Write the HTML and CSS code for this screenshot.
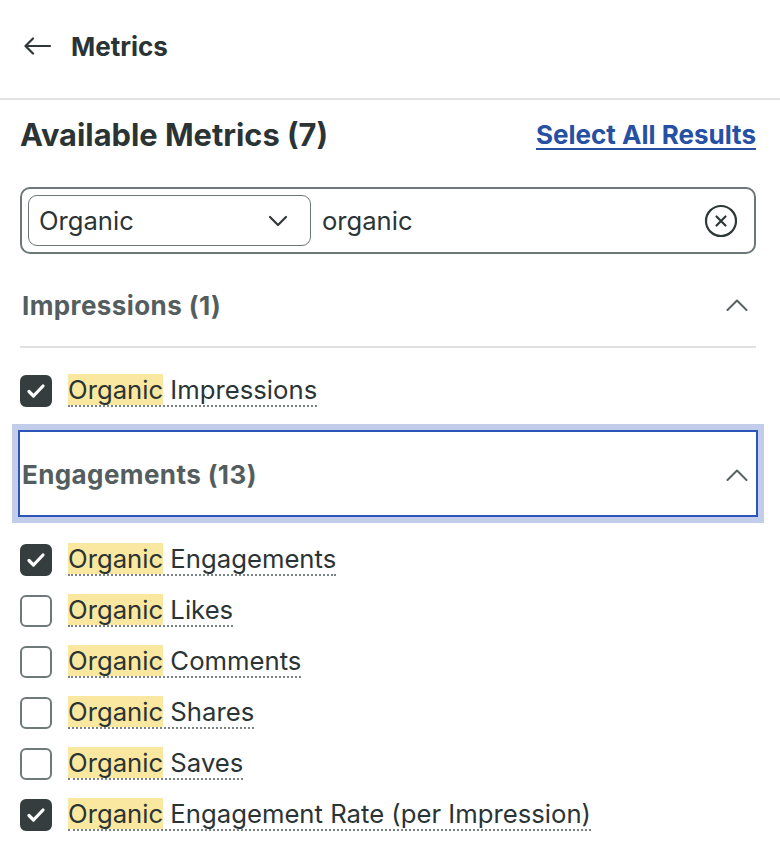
FILE: index.html
```html
<!DOCTYPE html>
<html lang="en">
<head>
    <meta charset="UTF-8">
    <meta name="viewport" content="width=device-width, initial-scale=1.0">
    <title>Metrics</title>
    <link rel="stylesheet" href="styles.css">
</head>
<body>
    <header class="topbar">
        <button class="back-btn" aria-label="Back">
            <svg width="28" height="18" viewBox="0 0 28 18" fill="none" stroke="#2f3838" stroke-width="2.2" stroke-linecap="round" stroke-linejoin="round">
                <path d="M26 9H2"/>
                <path d="M9 1.5L1.5 9 9 16.5"/>
            </svg>
        </button>
        <h1>Metrics</h1>
    </header>

    <main class="panel">
        <div class="panel-head">
            <h2>Available Metrics (7)</h2>
            <a href="#" class="select-all">Select All Results</a>
        </div>

        <div class="search">
            <div class="select">
                <span>Organic</span>
                <svg width="20" height="12" viewBox="0 0 20 12" fill="none" stroke="#2f3838" stroke-width="2.2" stroke-linecap="round" stroke-linejoin="round">
                    <path d="M2 2l8 8 8-8"/>
                </svg>
            </div>
            <input type="text" class="search-input" value="organic">
            <button class="clear-btn" aria-label="Clear">
                <svg width="34" height="34" viewBox="0 0 34 34" fill="none" stroke="#2f3838" stroke-width="2.2" stroke-linecap="round">
                    <circle cx="17" cy="17" r="15"/>
                    <path d="M12.5 12.5l9 9M21.5 12.5l-9 9"/>
                </svg>
            </button>
        </div>

        <section class="group">
            <button class="group-head">
                <span>Impressions (1)</span>
                <svg width="22" height="12" viewBox="0 0 22 12" fill="none" stroke="#576161" stroke-width="2" stroke-linecap="round" stroke-linejoin="round">
                    <path d="M1.5 11L11 1.5 20.5 11"/>
                </svg>
            </button>
            <ul class="metric-list">
                <li>
                    <label class="metric">
                        <span class="box checked"><svg width="20" height="16" viewBox="0 0 20 16" fill="none" stroke="#fff" stroke-width="3.2" stroke-linecap="round" stroke-linejoin="round"><path d="M3 8.5l4.5 4.5 9.5-10"/></svg></span>
                        <span class="name"><mark>Organic</mark> Impressions</span>
                    </label>
                </li>
            </ul>
        </section>

        <section class="group">
            <button class="group-head is-focused">
                <span>Engagements (13)</span>
                <svg width="22" height="12" viewBox="0 0 22 12" fill="none" stroke="#576161" stroke-width="2" stroke-linecap="round" stroke-linejoin="round">
                    <path d="M1.5 11L11 1.5 20.5 11"/>
                </svg>
            </button>
            <ul class="metric-list">
                <li>
                    <label class="metric">
                        <span class="box checked"><svg width="20" height="16" viewBox="0 0 20 16" fill="none" stroke="#fff" stroke-width="3.2" stroke-linecap="round" stroke-linejoin="round"><path d="M3 8.5l4.5 4.5 9.5-10"/></svg></span>
                        <span class="name"><mark>Organic</mark> Engagements</span>
                    </label>
                </li>
                <li>
                    <label class="metric">
                        <span class="box"></span>
                        <span class="name"><mark>Organic</mark> Likes</span>
                    </label>
                </li>
                <li>
                    <label class="metric">
                        <span class="box"></span>
                        <span class="name"><mark>Organic</mark> Comments</span>
                    </label>
                </li>
                <li>
                    <label class="metric">
                        <span class="box"></span>
                        <span class="name"><mark>Organic</mark> Shares</span>
                    </label>
                </li>
                <li>
                    <label class="metric">
                        <span class="box"></span>
                        <span class="name"><mark>Organic</mark> Saves</span>
                    </label>
                </li>
                <li>
                    <label class="metric">
                        <span class="box checked"><svg width="20" height="16" viewBox="0 0 20 16" fill="none" stroke="#fff" stroke-width="3.2" stroke-linecap="round" stroke-linejoin="round"><path d="M3 8.5l4.5 4.5 9.5-10"/></svg></span>
                        <span class="name"><mark>Organic</mark> Engagement Rate (per Impression)</span>
                    </label>
                </li>
            </ul>
        </section>
    </main>
</body>
</html>
```

FILE: styles.css
```css
body {
    margin: 0;
    font-family: Inter, "Noto Sans", sans-serif;
    color: #2b3434;
    background: #ffffff;
}

button {
    font-family: inherit;
    background: none;
    border: none;
    padding: 0;
    cursor: pointer;
}

.topbar {
    display: flex;
    align-items: center;
    height: 100px;
    padding-left: 24px;
    border-bottom: 2px solid #e2e2e2;
    box-sizing: border-box;
}

.back-btn {
    display: flex;
    margin-right: 19px;
    margin-top: -6px;
}

.topbar h1 {
    margin: -6px 0 0;
    font-size: 26px;
    font-weight: 700;
}

.panel {
    padding: 0 24px 0 20px;
}

.panel-head {
    display: flex;
    justify-content: space-between;
    align-items: center;
    height: 68px;
}

.panel-head h2 {
    margin: 0;
    font-size: 30.8px;
    font-weight: 700;
}

.select-all {
    color: #2650a3;
    font-size: 26px;
    font-weight: 700;
    text-decoration: underline;
    text-underline-offset: 4px;
    text-decoration-thickness: 2px;
}

.search {
    display: flex;
    align-items: center;
    margin-top: 19px;
    height: 67px;
    padding: 0 16px 0 6px;
    border: 2px solid #6e7778;
    border-radius: 10px;
    box-sizing: border-box;
}

.select {
    display: flex;
    align-items: center;
    justify-content: space-between;
    flex-shrink: 0;
    width: 283px;
    height: 51px;
    padding: 0 22px 0 10px;
    border: 1.5px solid #6e7778;
    border-radius: 9px;
    box-sizing: border-box;
    font-size: 25.6px;
}

.search-input {
    flex: 1;
    min-width: 0;
    border: none;
    outline: none;
    margin-left: 11px;
    font-family: inherit;
    font-size: 25.6px;
    color: #2b3434;
    padding: 0;
}

.clear-btn {
    display: flex;
}

.group-head {
    display: flex;
    justify-content: space-between;
    align-items: center;
    width: 100%;
    height: 88px;
    margin-top: 6px;
    padding: 4px 8px 0 2px;
    border-bottom: 2px solid #dfe1e1;
    box-sizing: border-box;
    font-size: 26px;
    letter-spacing: 0.4px;
    font-weight: 700;
    color: #545e5e;
    text-align: left;
}

.group-head.is-focused {
    height: 83px;
    margin-top: 2px;
    padding-top: 2px;
    border-bottom: none;
    box-shadow: 0 0 0 2px #2d55b8, 0 0 0 8px #c2cceb;
}

.metric-list {
    list-style: none;
    margin: 0;
    padding: 27px 0 23px;
}

.group-head.is-focused + .metric-list {
    padding-top: 29px;
}

.metric-list li + li {
    margin-top: 19px;
}

.metric {
    display: flex;
    align-items: center;
    gap: 16px;
    font-size: 25.7px;
}

.box {
    display: flex;
    align-items: center;
    justify-content: center;
    width: 32px;
    height: 32px;
    border: 2px solid #6f797a;
    border-radius: 6px;
    box-sizing: border-box;
    flex-shrink: 0;
}

.box.checked {
    background: #353d3e;
    border-color: #353d3e;
}

.name {
    line-height: 30px;
    border-bottom: 2px dotted #7a8283;
}

mark {
    background: #fbe8a0;
    color: inherit;
}
```
